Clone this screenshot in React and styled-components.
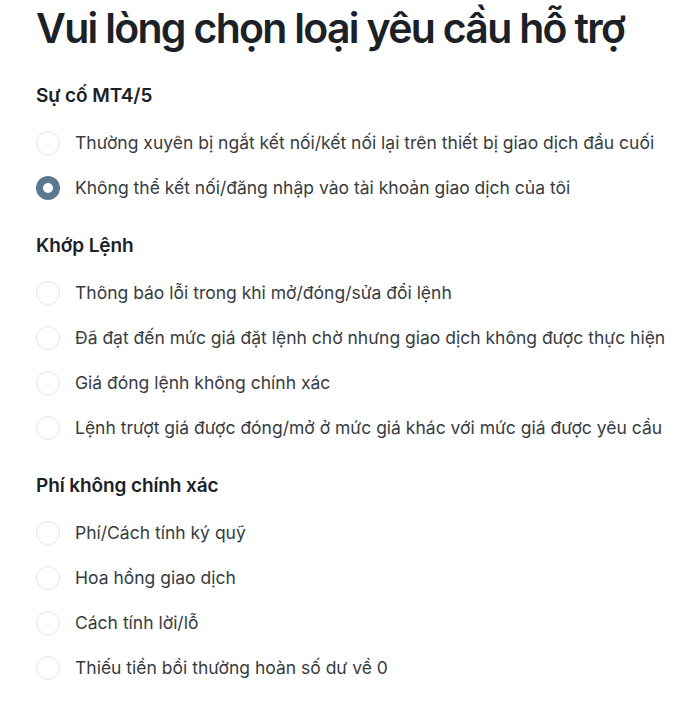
import React from "react";
import styled, { createGlobalStyle } from "styled-components";

const Global = createGlobalStyle`
  html, body { margin: 0; padding: 0; background: #ffffff; }
  body { font-family: Inter, "Noto Sans", sans-serif; color: #1f2328; }
`;

const Page = styled.div`
  padding: 0 0 0 36px;
`;

const Title = styled.h1`
  margin: 0;
  font-size: 41px;
  line-height: 56px;
  font-weight: 600;
  color: #1b2127;
  letter-spacing: -1.7px;
`;

const Section = styled.section`
  margin-top: ${(p) => (p.$first ? "28px" : "24px")};
`;

const Heading = styled.h2`
  margin: 0 0 12px;
  font-size: 19px;
  line-height: 24px;
  font-weight: 600;
  color: #1b2127;
  letter-spacing: -0.1px;
`;

const Row = styled.label`
  display: flex;
  align-items: center;
  height: 45px;
  gap: 15px;
  cursor: pointer;
`;

const Radio = styled.span`
  box-sizing: border-box;
  width: 24px;
  height: 24px;
  flex: none;
  border-radius: 50%;
  border: ${(p) => (p.$checked ? "7px solid #5a7990" : "1px solid #e3e5e8")};
  background: #ffffff;
`;

const Label = styled.span`
  font-size: 17.5px;
  line-height: 22px;
  color: #373c42;
  font-weight: 400;
`;

const data = [
  {
    title: "Sự cố MT4/5",
    items: [
      "Thường xuyên bị ngắt kết nối/kết nối lại trên thiết bị giao dịch đầu cuối",
      "Không thể kết nối/đăng nhập vào tài khoản giao dịch của tôi",
    ],
  },
  {
    title: "Khớp Lệnh",
    items: [
      "Thông báo lỗi trong khi mở/đóng/sửa đổi lệnh",
      "Đã đạt đến mức giá đặt lệnh chờ nhưng giao dịch không được thực hiện",
      "Giá đóng lệnh không chính xác",
      "Lệnh trượt giá được đóng/mở ở mức giá khác với mức giá được yêu cầu",
    ],
  },
  {
    title: "Phí không chính xác",
    items: [
      "Phí/Cách tính ký quỹ",
      "Hoa hồng giao dịch",
      "Cách tính lời/lỗ",
      "Thiếu tiền bồi thường hoàn số dư về 0",
    ],
  },
];

export default function App() {
  const selected = "Không thể kết nối/đăng nhập vào tài khoản giao dịch của tôi";
  return (
    <>
      <Global />
      <Page>
        <Title>Vui lòng chọn loại yêu cầu hỗ trợ</Title>
        {data.map((s, i) => (
          <Section key={s.title} $first={i === 0}>
            <Heading>{s.title}</Heading>
            {s.items.map((it) => (
              <Row key={it}>
                <Radio $checked={it === selected} />
                <Label>{it}</Label>
              </Row>
            ))}
          </Section>
        ))}
      </Page>
    </>
  );
}
